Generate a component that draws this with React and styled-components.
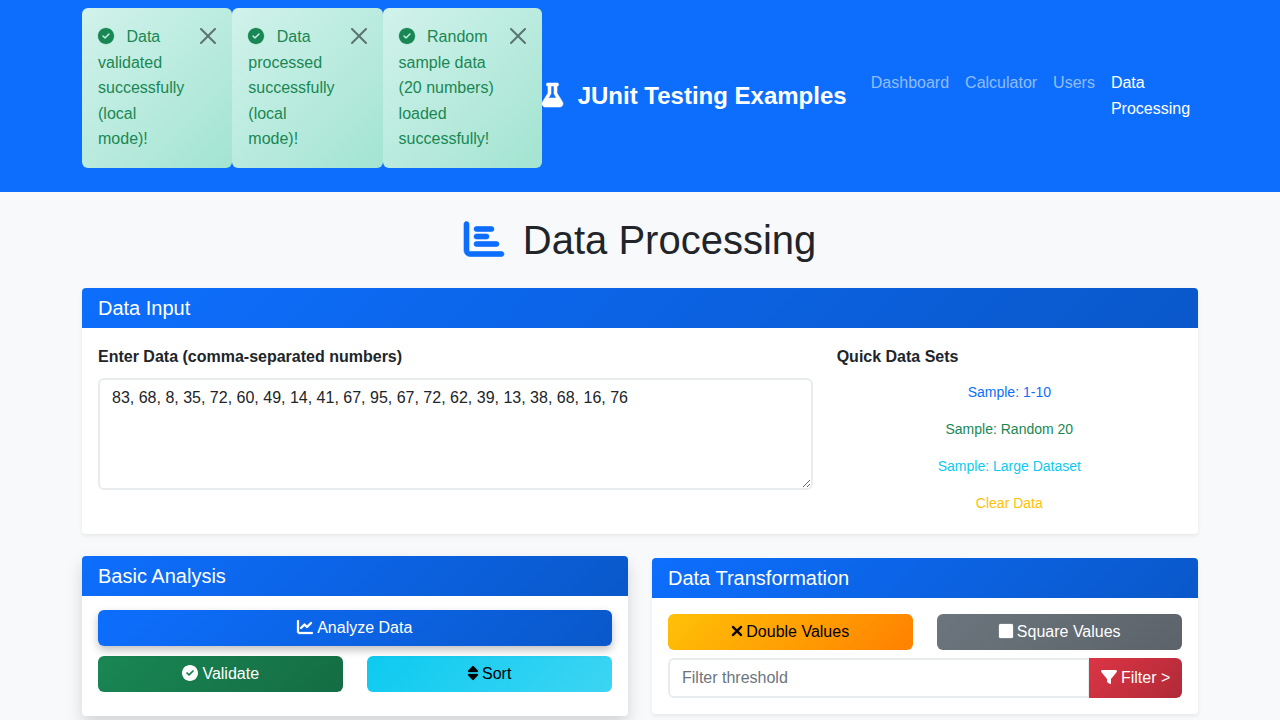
import React from "react";
import styled, { createGlobalStyle } from "styled-components";

const GlobalStyle = createGlobalStyle`
  *, *::before, *::after { box-sizing: border-box; }
  body {
    margin: 0;
    height: 100vh;
    overflow: hidden;
    background: #f8f9fa;
    color: #212529;
    font-family: "Liberation Sans", Arial, sans-serif;
    font-size: 16px;
    line-height: 1.6;
  }
`;

const gradients = {
  primary: ["#0d6efd", "#0a58ca", "#fff"],
  success: ["#198754", "#146c43", "#fff"],
  info: ["#0dcaf0", "#3dd5f3", "#000"],
  warning: ["#ffc107", "#ff8000", "#000"],
  secondary: ["#6c757d", "#5c636a", "#fff"],
  danger: ["#dc3545", "#b02a37", "#fff"],
};

// Each glyph: width on a 512-unit-high grid, and its outline.
const glyphs = {
  check: [
    512,
    "M0 256C0 114.6 114.6 0 256 0C397.4 0 512 114.6 512 256C512 397.4 397.4 512 256 512C114.6 512 0 397.4 0 256zM371.8 211.8C382.7 200.9 382.7 183.1 371.8 172.2C360.9 161.3 343.1 161.3 332.2 172.2L224 280.4L179.8 236.2C168.9 225.3 151.1 225.3 140.2 236.2C129.3 247.1 129.3 264.9 140.2 275.8L204.2 339.8C215.1 350.7 232.9 350.7 243.8 339.8L371.8 211.8z",
  ],
  flask: [
    448,
    "M437.2 403.5L320 215V64h8c13.25 0 24-10.75 24-24V24c0-13.25-10.75-24-24-24H120C106.8 0 96 10.75 96 24v16c0 13.25 10.75 24 24 24h8v151L10.8 403.5C-18.48 450.6 15.27 512 70.89 512h306.2C432.7 512 466.5 450.5 437.2 403.5zM137.1 320l48.15-77.63C189.8 237.3 192 230.8 192 224V64h64v160c0 6.875 2.25 13.25 5.875 18.38L309.9 320H137.1z",
  ],
  bars: [
    512,
    "M32 32C49.67 32 64 46.33 64 64V400C64 408.8 71.16 416 80 416H480C497.7 416 512 430.3 512 448C512 465.7 497.7 480 480 480H80C35.82 480 0 444.2 0 400V64C0 46.33 14.33 32 32 32zM160 96H352a32 32 0 0 1 0 64H160a32 32 0 0 1 0-64zM160 192H288a32 32 0 0 1 0 64H160a32 32 0 0 1 0-64zM160 288H416a32 32 0 0 1 0 64H160a32 32 0 0 1 0-64z",
  ],
  line: [
    512,
    "M64 400C64 408.8 71.16 416 80 416H480C497.7 416 512 430.3 512 448C512 465.7 497.7 480 480 480H80C35.82 480 0 444.2 0 400V64C0 46.33 14.33 32 32 32C49.67 32 64 46.33 64 64V400zM342.6 278.6C330.1 291.1 309.9 291.1 297.4 278.6L240 221.3L150.6 310.6C138.1 323.1 117.9 323.1 105.4 310.6C92.88 298.1 92.88 277.9 105.4 265.4L217.4 153.4C229.9 140.9 250.1 140.9 262.6 153.4L320 210.7L425.4 105.4C437.9 92.88 458.1 92.88 470.6 105.4C483.1 117.9 483.1 138.1 470.6 150.6L342.6 278.6z",
  ],
  sort: [
    320,
    "M27.66 224h264.7c24.6 0 36.89-29.78 19.54-47.12l-132.3-136.8c-5.406-5.406-12.47-8.107-19.53-8.107c-7.055 0-14.09 2.701-19.45 8.107L8.119 176.9C-9.229 194.2 3.055 224 27.66 224zM292.3 288H27.66c-24.6 0-36.89 29.77-19.54 47.12l132.5 136.8C145.9 477.3 152.1 480 160 480c7.053 0 14.12-2.703 19.53-8.109l132.3-136.8C329.2 317.8 316.9 288 292.3 288z",
  ],
  times: [
    320,
    "M310.6 361.4c12.5 12.5 12.5 32.75 0 45.25C304.4 412.9 296.2 416 288 416s-16.38-3.125-22.62-9.375L160 301.3L54.63 406.6C48.38 412.9 40.19 416 32 416S15.63 412.9 9.375 406.6c-12.5-12.5-12.5-32.75 0-45.25l105.4-105.4L9.375 150.6c-12.5-12.5-12.5-32.75 0-45.25s32.75-12.5 45.25 0L160 210.8l105.4-105.4c12.5-12.5 32.75-12.5 45.25 0s12.5 32.75 0 45.25l-105.4 105.4L310.6 361.4z",
  ],
  square: [
    448,
    "M44 32H404a44 44 0 0 1 44 44V436a44 44 0 0 1-44 44H44a44 44 0 0 1-44-44V76a44 44 0 0 1 44-44z",
  ],
  filter: [
    512,
    "M3.853 54.87C10.47 40.9 24.54 32 40 32H472C487.5 32 501.5 40.9 508.1 54.87C514.8 68.84 512.7 85.37 502.1 97.33L320 320.9V448C320 460.1 313.2 471.2 302.3 476.6C291.5 482 278.5 480.9 268.8 473.6L204.8 425.6C196.7 419.6 192 410.1 192 400V320.9L9.042 97.33C-.745 85.37-2.765 68.84 3.854 54.87z",
  ],
};

const Glyph = styled.svg`
  width: ${(p) => p.$units / 512}em;
  height: 1em;
  margin-left: ${(p) => p.$nudge || 0}px;
  margin-right: ${(p) => (p.$gap || 0) - (p.$nudge || 0)}px;
  overflow: visible;
  vertical-align: -0.125em;
  fill: ${(p) => p.$color || "currentColor"};
  stroke: ${(p) => p.$color || "currentColor"};
  stroke-width: ${(p) => p.$weight || 0};
`;

function Icon({ name, gap, nudge, color, weight }) {
  const [units, path] = glyphs[name];
  return (
    <Glyph
      viewBox={`0 0 ${units} 512`}
      aria-hidden="true"
      $units={units}
      $gap={gap}
      $nudge={nudge}
      $color={color}
      $weight={weight}
    >
      <path d={path} />
    </Glyph>
  );
}

const Navbar = styled.nav`
  padding: 8px 0;
  background: #0d6efd;
`;

const Container = styled.div`
  width: 1140px;
  margin: 0 auto;
  padding: 0 12px;
`;

const NavbarContent = styled(Container)`
  display: flex;
  align-items: center;
`;

const Alert = styled.div`
  position: relative;
  flex: 0 0 ${(p) => p.$width}px;
  margin-bottom: 16px;
  padding: 16px 48px 16px 16px;
  border-radius: 6px;
  background: linear-gradient(135deg, #d1f2eb, #a3e4d1);
  color: #198754;
`;

const CloseButton = styled.button`
  position: absolute;
  top: 0;
  right: 0;
  display: flex;
  padding: 20px 16px;
  border: 0;
  background: transparent;
  opacity: 0.5;
`;

const Brand = styled.div`
  flex: none;
  margin-right: 16.2px;
  color: #fff;
  font-size: 24px;
  font-weight: 700;
  white-space: nowrap;
`;

const NavLinks = styled.ul`
  display: flex;
  flex: 1;
  margin: 0;
  padding: 0;
  list-style: none;
`;

const NavLink = styled.li`
  padding: 8px;
  color: ${(p) => (p.$active ? "#fff" : "rgba(255, 255, 255, 0.55)")};
`;

const Title = styled.h1`
  margin: 24px 0;
  font-size: 40px;
  font-weight: 400;
  line-height: 1.2;
  text-align: center;
`;

const Card = styled.section`
  margin-bottom: 24px;
  border-radius: 4px;
  background: #fff;
  box-shadow: ${(p) =>
    p.$raised
      ? "0 8px 16px rgba(0, 0, 0, 0.15)"
      : "0 2px 4px rgba(0, 0, 0, 0.075)"};
  transform: ${(p) => (p.$raised ? "translateY(-2px)" : "none")};
`;

const CardHeader = styled.h5`
  margin: 0;
  padding: 8px 16px;
  border-radius: 4px 4px 0 0;
  background: linear-gradient(135deg, #0d6efd, #0a58ca);
  color: #fff;
  font-size: 20px;
  font-weight: 400;
  line-height: 24px;
`;

const CardBody = styled.div`
  padding: 16px;
  padding-bottom: ${(p) => p.$bottom || 16}px;
`;

const Columns = styled.div`
  display: grid;
  grid-template-columns: ${(p) => p.$columns || "1fr 1fr"};
  column-gap: 24px;
  align-items: start;
`;

const Stack = styled.div`
  display: grid;
  gap: 8px;
`;

const Label = styled.label`
  display: block;
  margin-bottom: 8px;
  font-weight: 700;
`;

const Field = styled.input`
  display: block;
  width: 100%;
  margin: 0;
  padding: 6px 12px;
  border: 2px solid #e9ecef;
  border-radius: 6px;
  outline: 0;
  background: #fff;
  color: #212529;
  font: inherit;
  line-height: 1.5;

  &::placeholder {
    color: #6c757d;
    opacity: 1;
  }
`;

const DataArea = styled(Field)`
  resize: vertical;
`;

const SampleButton = styled.button`
  padding: 4px 8px;
  border: 0;
  background: transparent;
  color: ${(p) => p.$color};
  font: inherit;
  font-size: 14px;
  line-height: 21px;
`;

const Button = styled.button`
  padding: 6px 12px;
  border: 0;
  border-radius: 6px;
  background: linear-gradient(
    135deg,
    ${(p) => gradients[p.$variant][0]},
    ${(p) => gradients[p.$variant][1]}
  );
  color: ${(p) => gradients[p.$variant][2]};
  font: inherit;
  line-height: 24px;
  white-space: nowrap;
  box-shadow: ${(p) => (p.$raised ? "0 4px 8px rgba(0, 0, 0, 0.25)" : "none")};
  transform: ${(p) => (p.$raised ? "translateY(-2px)" : "none")};
`;

const InputGroup = styled.div`
  display: flex;

  ${Field} {
    flex: 1;
    min-width: 0;
    height: 40px;
    border-radius: 6px 0 0 6px;
  }

  ${Button} {
    flex: 0 0 93px;
    margin-left: -1px;
    padding: 6px 11.7px;
    border-radius: 0 6px 6px 0;
    z-index: 1;
  }
`;

const alerts = [
  { text: "Data validated successfully (local mode)!", width: 150.3 },
  { text: "Data processed successfully (local mode)!", width: 150.3 },
  { text: "Random sample data (20 numbers) loaded successfully!", width: 159.4 },
];

const samples = [
  ["Sample: 1-10", "#0d6efd"],
  ["Sample: Random 20", "#198754"],
  ["Sample: Large Dataset", "#0dcaf0"],
  ["Clear Data", "#ffc107"],
];

export default function App() {
  return (
    <>
      <GlobalStyle />
      <Navbar>
        <NavbarContent>
          {alerts.map((alert) => (
            <Alert key={alert.text} $width={alert.width}>
              <Icon name="check" gap={8} weight={8} /> {alert.text}
              <CloseButton aria-label="Close">
                <svg width="16" height="16" viewBox="0 0 16 16">
                  <path d="M.293.293a1 1 0 0 1 1.414 0L8 6.586 14.293.293a1 1 0 1 1 1.414 1.414L9.414 8l6.293 6.293a1 1 0 0 1-1.414 1.414L8 9.414l-6.293 6.293a1 1 0 0 1-1.414-1.414L6.586 8 .293 1.707a1 1 0 0 1 0-1.414z" />
                </svg>
              </CloseButton>
            </Alert>
          ))}
          <Brand>
            <Icon name="flask" gap={8} weight={12} /> JUnit Testing Examples
          </Brand>
          <NavLinks>
            <NavLink>Dashboard</NavLink>
            <NavLink>Calculator</NavLink>
            <NavLink>Users</NavLink>
            <NavLink $active>Data Processing</NavLink>
          </NavLinks>
        </NavbarContent>
      </Navbar>

      <Container as="main">
        <Title>
          <Icon name="bars" gap={8} color="#0d6efd" weight={8} /> Data Processing
        </Title>

        <Card>
          <CardHeader>Data Input</CardHeader>
          <CardBody>
            <Columns $columns="714.67px 1fr">
              <div>
                <Label htmlFor="data">Enter Data (comma-separated numbers)</Label>
                <DataArea
                  as="textarea"
                  id="data"
                  rows={4}
                  spellCheck={false}
                  defaultValue="83, 68, 8, 35, 72, 60, 49, 14, 41, 67, 95, 67, 72, 62, 39, 13, 38, 68, 16, 76"
                />
              </div>
              <div>
                <Label as="div">Quick Data Sets</Label>
                <Stack>
                  {samples.map(([label, color]) => (
                    <SampleButton key={label} $color={color}>{label}</SampleButton>
                  ))}
                </Stack>
              </div>
            </Columns>
          </CardBody>
        </Card>

        <Columns>
          <Card $raised>
            <CardHeader>Basic Analysis</CardHeader>
            <CardBody $bottom={24}>
              <Stack>
                <Button $variant="primary" $raised>
                  <Icon name="line" nudge={-0.7} weight={8} /> Analyze Data
                </Button>
                <Columns>
                  <Button $variant="success">
                    <Icon name="check" /> Validate
                  </Button>
                  <Button $variant="info">
                    <Icon name="sort" weight={8} /> Sort
                  </Button>
                </Columns>
              </Stack>
            </CardBody>
          </Card>

          <Card>
            <CardHeader>Data Transformation</CardHeader>
            <CardBody>
              <Stack>
                <Columns>
                  <Button $variant="warning">
                    <Icon name="times" weight={14} /> Double Values
                  </Button>
                  <Button $variant="secondary">
                    <Icon name="square" nudge={0.8} weight={8} /> Square Values
                  </Button>
                </Columns>
                <InputGroup>
                  <Field placeholder="Filter threshold" />
                  <Button $variant="danger">
                    <Icon name="filter" nudge={0.4} /> Filter &gt;
                  </Button>
                </InputGroup>
              </Stack>
            </CardBody>
          </Card>
        </Columns>
      </Container>
    </>
  );
}
